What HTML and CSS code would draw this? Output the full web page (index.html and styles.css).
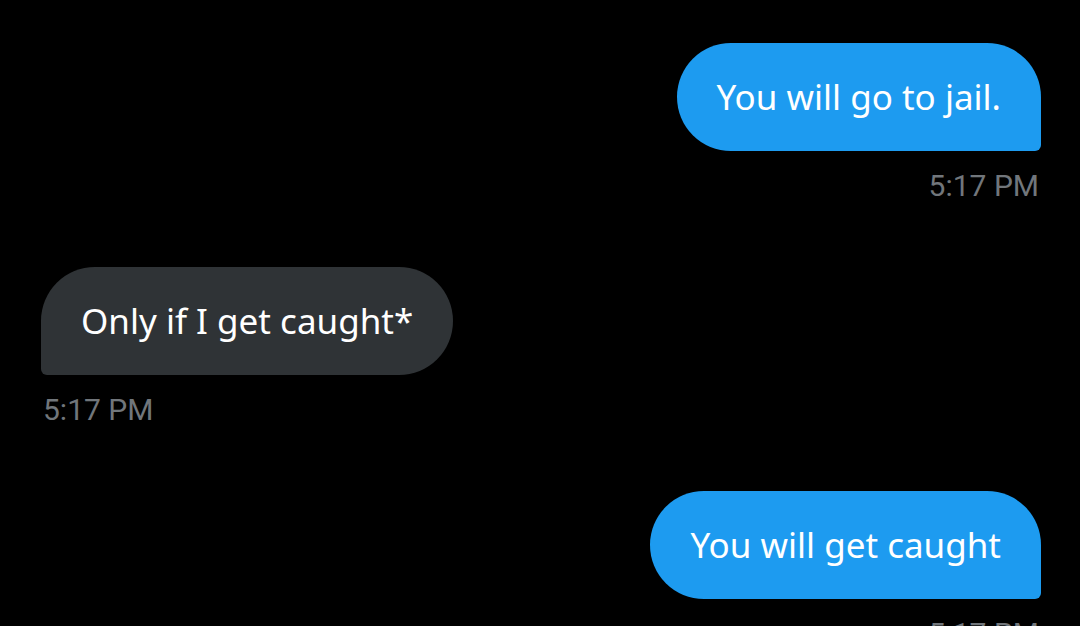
FILE: index.html
```html
<!DOCTYPE html>
<html>
<head>
<meta charset="utf-8">
<link rel="stylesheet" href="styles.css">
</head>
<body>
<div class="thread">
  <div class="msg sent">
    <div class="bubble">You will go to jail.</div>
    <div class="time">5:17 PM</div>
  </div>
  <div class="msg received">
    <div class="bubble">Only if I get caught*</div>
    <div class="time">5:17 PM</div>
  </div>
  <div class="msg sent">
    <div class="bubble">You will get caught</div>
    <div class="time">5:17 PM</div>
  </div>
</div>
</body>
</html>
```
FILE: styles.css
```css
html, body {
  margin: 0;
  padding: 0;
  background: #000;
  height: 100%;
  overflow: hidden;
}
.thread {
  display: flex;
  flex-direction: column;
  padding: 43px 39px 0 41px;
}
.msg {
  display: flex;
  flex-direction: column;
  height: 224px;
}
.msg.sent { align-items: flex-end; }
.msg.received { align-items: flex-start; }
.bubble {
  font-family: "Noto Sans", sans-serif;
  font-size: 35px;
  line-height: 44px;
  color: #fff;
  padding: 32px 40px;
  border-radius: 54px;
}
.sent .bubble {
  background: #1d9bf0;
  border-bottom-right-radius: 6px;
}
.received .bubble {
  background: #2f3336;
  border-bottom-left-radius: 6px;
}
.time {
  font-family: Roboto, sans-serif;
  font-size: 30px;
  line-height: 34px;
  color: #71767b;
  margin-top: 18px;
  padding: 0 2px;
}
```
